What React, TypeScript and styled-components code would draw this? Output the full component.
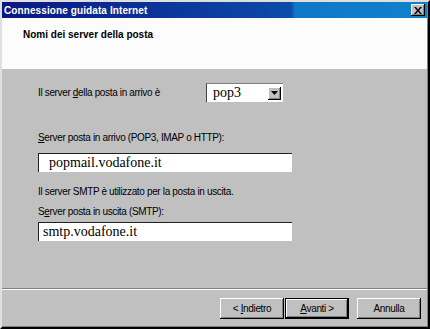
import styled, { createGlobalStyle } from "styled-components";

const Global = createGlobalStyle`
  html, body {
    margin: 0;
    padding: 0;
    background: #c0c0c0;
  }
  body {
    font-family: "Liberation Sans", Arial, sans-serif;
  }
`;

const Window = styled.div`
  width: 430px;
  height: 329px;
  box-sizing: border-box;
  display: flex;
  flex-direction: column;
  background: #c0c0c0;
  border-top: 2px solid #dfdfdf;
  border-left: 2px solid #dfdfdf;
  border-right: 2px solid #000;
  border-bottom: 2px solid #000;
  box-shadow: inset -1px -1px 0 #808080;
  overflow: hidden;
`;

const TitleBar = styled.div`
  height: 16px;
  flex: none;
  display: flex;
  align-items: center;
  justify-content: space-between;
  padding: 0 2px 0 2px;
  margin-right: 1px;
  background: linear-gradient(90deg, #0a1782 0%, #0b3a9e 45%, #0c4ba8 68%, #0f78c8 69%, #1080cc 100%);
`;

const Title = styled.span`
  color: #fff;
  font-size: 10px;
  font-weight: bold;
  letter-spacing: 0.1px;
  white-space: nowrap;
`;

const CloseButton = styled.div`
  width: 14px;
  height: 12px;
  box-sizing: border-box;
  background: #c0c0c0;
  display: flex;
  align-items: center;
  justify-content: center;
  box-shadow: inset -1px -1px 0 #000, inset 1px 1px 0 #fff, inset -2px -2px 0 #808080;
`;

const Header = styled.div`
  height: 51px;
  flex: none;
  background: #fcfcfc;
  margin-right: 1px;
  padding: 11px 0 0 21px;
  box-sizing: border-box;
`;

const HeaderTitle = styled.div`
  font-size: 10px;
  font-weight: bold;
  color: #000;
`;

const Body = styled.div`
  flex: 1;
  padding: 14px 0 0 36px;
  display: flex;
  flex-direction: column;
`;

const Row = styled.div`
  display: flex;
  align-items: center;
`;

const Label = styled.div<{ $gap?: number; $width?: number }>`
  font-size: 10px;
  letter-spacing: -0.35px;
  line-height: 12px;
  color: #000;
  margin-top: ${(p) => p.$gap ?? 0}px;
  width: ${(p) => (p.$width ? `${p.$width}px` : "auto")};
  flex: none;
  white-space: pre;
  u {
    text-decoration: underline;
    text-underline-offset: 1px;
  }
`;

const Select = styled.div`
  width: 77px;
  height: 19px;
  box-sizing: border-box;
  background: #fff;
  border-top: 1px solid #808080;
  border-left: 1px solid #404040;
  display: flex;
  align-items: center;
  justify-content: space-between;
  padding: 0 2px 0 6px;
`;

const FieldText = styled.span`
  font-family: "Liberation Serif", "Times New Roman", serif;
  font-size: 14px;
  color: #000;
  line-height: 1;
`;

const ArrowButton = styled.div`
  width: 13px;
  height: 13px;
  box-sizing: border-box;
  background: #c0c0c0;
  display: flex;
  align-items: center;
  justify-content: center;
  box-shadow: inset -1px -1px 0 #000, inset 1px 1px 0 #fff, inset -2px -2px 0 #808080;
`;

const Field = styled.div<{ $gap: number; $pad: number }>`
  width: 254px;
  height: 19px;
  margin-top: ${(p) => p.$gap}px;
  box-sizing: border-box;
  background: #fff;
  border-top: 1px solid #202020;
  border-left: 1px solid #202020;
  display: flex;
  align-items: center;
  padding-left: ${(p) => p.$pad}px;
`;

const Separator = styled.div`
  height: 0;
  flex: none;
  border-top: 1px solid #808080;
  border-bottom: 1px solid #fff;
  margin-right: 1px;
`;

const Footer = styled.div`
  height: 37px;
  flex: none;
  display: flex;
  align-items: center;
  justify-content: flex-end;
  padding-right: 7px;
`;

const Button = styled.div<{ $default?: boolean; $space?: number }>`
  width: 64px;
  height: 21px;
  box-sizing: border-box;
  margin-left: ${(p) => p.$space ?? 0}px;
  background: #c0c0c0;
  display: flex;
  align-items: center;
  justify-content: center;
  font-size: 10px;
  letter-spacing: -0.35px;
  white-space: pre;
  color: #000;
  border: ${(p) => (p.$default ? "1px solid #000" : "none")};
  box-shadow: inset -1px -1px 0 #000, inset 1px 1px 0 #fff, inset -2px -2px 0 #808080;
  u {
    text-decoration: underline;
    text-underline-offset: 1px;
  }
`;

export default function App() {
  return (
    <>
      <Global />
      <Window>
        <TitleBar>
          <Title>Connessione guidata Internet</Title>
          <CloseButton>
            <svg width="8" height="7" viewBox="0 0 8 7">
              <path d="M0 0h2l2 2.5L6 0h2L5 3.5 8 7H6L4 4.5 2 7H0l3-3.5z" fill="#000" />
            </svg>
          </CloseButton>
        </TitleBar>
        <Header>
          <HeaderTitle>Nomi dei server della posta</HeaderTitle>
        </Header>
        <Body>
          <Row>
            <Label $width={168}>
              {"Il server "}<u>d</u>{"ella posta in arrivo è"}
            </Label>
            <Select>
              <FieldText>pop3</FieldText>
              <ArrowButton>
                <svg width="7" height="4" viewBox="0 0 7 4">
                  <path d="M0 0h7L3.5 4z" fill="#000" />
                </svg>
              </ArrowButton>
            </Select>
          </Row>
          <Label $gap={30}>
            <u>S</u>{"erver posta in arrivo (POP3, IMAP o HTTP):"}
          </Label>
          <Field $gap={9} $pad={10}>
            <FieldText>popmail.vodafone.it</FieldText>
          </Field>
          <Label $gap={14}>Il server SMTP è utilizzato per la posta in uscita.</Label>
          <Label $gap={8}>
            {"S"}<u>e</u>{"rver posta in uscita (SMTP):"}
          </Label>
          <Field $gap={4} $pad={4}>
            <FieldText>smtp.vodafone.it</FieldText>
          </Field>
        </Body>
        <Separator />
        <Footer>
          <Button>
            {"< "}<u>I</u>{"ndietro"}
          </Button>
          <Button $default $space={1}>
            <u>A</u>{"vanti >"}
          </Button>
          <Button $space={8}>Annulla</Button>
        </Footer>
      </Window>
    </>
  );
}
